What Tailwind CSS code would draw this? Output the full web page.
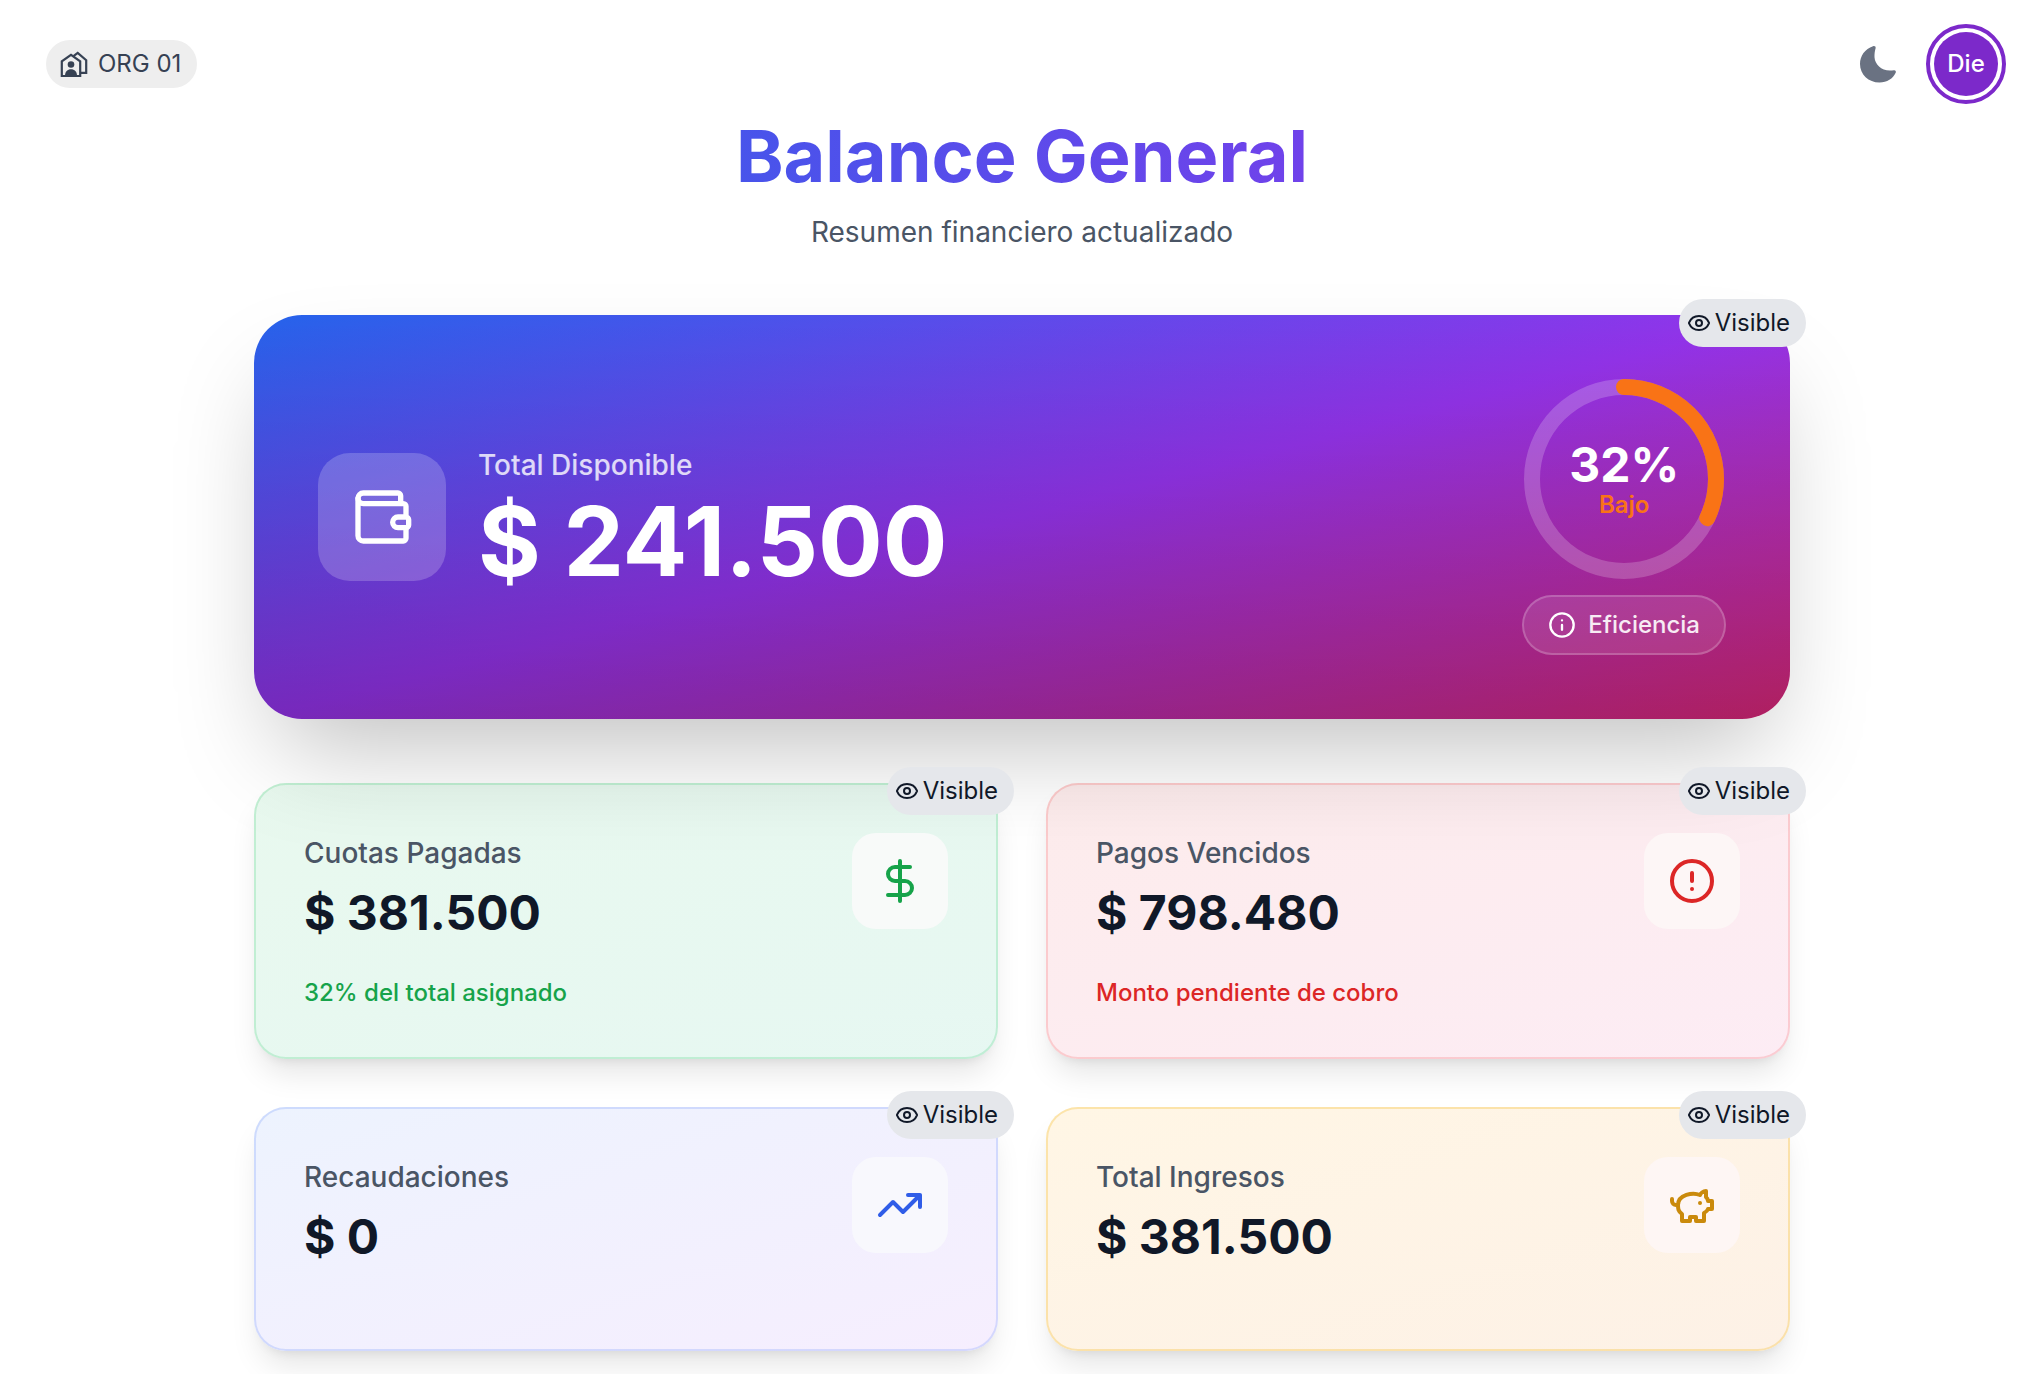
<!DOCTYPE html>
<html lang="es">
<head>
    <meta charset="UTF-8">
    <meta name="viewport" content="width=device-width, initial-scale=1.0">
    <title>Balance General</title>
    <script src="https://cdn.jsdelivr.net/npm/@tailwindcss/browser@4"></script>
</head>
<body class="min-h-screen bg-white pl-4 font-['Inter',sans-serif] text-gray-900">

    <!-- iconos compartidos -->
    <svg class="hidden">
        <symbol id="icon-eye" viewBox="0 0 24 24" fill="none" stroke="currentColor" stroke-width="2" stroke-linecap="round" stroke-linejoin="round">
            <path d="M2.06 12.35a1 1 0 0 1 0-.7 10.75 10.75 0 0 1 19.88 0 1 1 0 0 1 0 .7 10.75 10.75 0 0 1-19.88 0"/>
            <circle cx="12" cy="12" r="3"/>
        </symbol>
    </svg>

    <header class="flex items-center justify-between pt-6 pr-[22px] pl-[30px]">
        <button class="flex h-12 items-center gap-2.5 rounded-full bg-[#eeeeee] pr-4 pl-3.5 text-2xl text-gray-700">
            <svg class="size-7" viewBox="0 0 28 28" fill="none" stroke="currentColor" stroke-width="2.2">
                <path d="M1.8 26V11.400L11 4.800 20.200 11.400V26Z"/>
                <path d="M13.500 6.200 17.700 3 26.200 10.200V22.800H20.500"/>
                <circle cx="11" cy="14.500" r="3.300" fill="currentColor" stroke="none"/>
                <path d="M5 26C5 21.500 7.500 19.300 11 19.300S17 21.500 17 26Z" fill="currentColor" stroke="none"/>
            </svg>
            ORG 01
        </button>
        <div class="flex items-center gap-7">
            <button class="text-gray-500" aria-label="Cambiar tema">
                <svg class="size-10" viewBox="-2 -1.5 40 40" fill="currentColor">
                    <path d="M13 .8c1.600-.6 3 .4 2.600 2-.9 3-1.200 6-1.100 9C15 19 21 25 30 25c1.400 0 2.600 0 3.800-.3 1.600-.3 2.500 1 1.900 2.500C33 33 27 37 19.500 37 8.500 37 0 29 0 18.500 0 10.500 5 3.500 13 .8Z"/>
                </svg>
            </button>
            <button class="flex size-20 items-center justify-center rounded-full border-4 border-[#7c29ca] bg-white p-1">
                <span class="flex size-full items-center justify-center rounded-full bg-[#7c29ca] text-2xl font-medium text-white">Die</span>
            </button>
        </div>
    </header>

    <main class="mx-auto max-w-[1536px] pt-3 pb-6">
        <div class="mb-[63px] text-center">
            <h1 class="bg-linear-to-r/srgb from-[#2563eb] to-[#9333ea] bg-clip-text text-7xl leading-20 font-bold text-transparent">Balance General</h1>
            <p class="mt-4 text-[28px] leading-10 text-gray-600">Resumen financiero actualizado</p>
        </div>

        <!-- total disponible -->
        <section class="relative mb-16 rounded-[48px] bg-linear-to-br/srgb from-[#2563eb] via-[#9333ea] to-[#db2777] shadow-[0_50px_100px_-24px_rgba(0,0,0,0.25)]">
            <div class="flex items-center justify-between rounded-[48px] bg-linear-to-t/srgb from-black/20 to-transparent p-16">
                <div class="flex items-center gap-8">
                    <div class="flex size-32 items-center justify-center rounded-[32px] bg-white/20 text-white">
                        <svg class="size-16" viewBox="0 0 24 24" fill="none" stroke="currentColor" stroke-width="2" stroke-linecap="round" stroke-linejoin="round">
                            <path d="M19 7V4a1 1 0 0 0-1-1H5a2 2 0 0 0 0 4h15a1 1 0 0 1 1 1v4h-3a2 2 0 0 0 0 4h3a1 1 0 0 0 1-1v-2a1 1 0 0 0-1-1"/>
                            <path d="M3 5v14a2 2 0 0 0 2 2h15a1 1 0 0 0 1-1v-4"/>
                        </svg>
                    </div>
                    <div>
                        <p class="text-[28px] leading-10 font-medium text-white/80">Total Disponible</p>
                        <p class="mt-2 text-8xl leading-24 font-bold text-white">$ 241.500</p>
                    </div>
                </div>
                <div class="flex flex-col items-center gap-4">
                    <div class="relative size-50">
                        <svg class="size-full -rotate-90" viewBox="0 0 200 200" fill="none" stroke-width="16">
                            <circle cx="100" cy="100" r="92" stroke="white" stroke-opacity="0.2"/>
                            <circle cx="100" cy="100" r="92" pathLength="100" stroke="#f97316" stroke-linecap="round" stroke-dasharray="32 100"/>
                        </svg>
                        <div class="absolute inset-0 flex flex-col items-center justify-center pt-1">
                            <span class="text-5xl leading-12 font-bold text-white">32%</span>
                            <span class="text-2xl leading-8 font-semibold text-[#f97316]">Bajo</span>
                        </div>
                    </div>
                    <button class="flex h-15 items-center gap-3 rounded-full border-2 border-white/20 bg-white/10 px-6 text-2xl font-medium text-white/90">
                        <svg class="size-7 text-white" viewBox="0 0 24 24" fill="none" stroke="currentColor" stroke-width="2" stroke-linecap="round" stroke-linejoin="round">
                            <circle cx="12" cy="12" r="10"/>
                            <path d="M12 16v-4M12 8h.01"/>
                        </svg>
                        Eficiencia
                    </button>
                </div>
            </div>
            <button class="absolute -top-4 -right-4 flex h-12 items-center gap-1 rounded-full bg-gray-200 pr-4 pl-2 text-2xl">
                <svg class="size-6"><use href="#icon-eye"/></svg>Visible
            </button>
        </section>

        <div class="grid grid-cols-2 gap-12">
            <!-- cuotas pagadas -->
            <section class="relative rounded-[32px] border-2 border-[#22c55e]/20 bg-linear-to-br/srgb from-[#22c55e]/10 to-[#10b981]/10 bg-origin-border p-12 shadow-[0_20px_30px_-6px_rgba(0,0,0,0.1),0_8px_12px_-8px_rgba(0,0,0,0.1)]">
                <div class="flex items-start justify-between">
                    <div>
                        <p class="text-[28px] leading-10 font-medium text-gray-600">Cuotas Pagadas</p>
                        <p class="mt-2 text-5xl leading-16 font-bold">$ 381.500</p>
                    </div>
                    <div class="flex size-24 items-center justify-center rounded-3xl bg-[#f8faf9] text-[#16a34a]">
                        <svg class="size-12" viewBox="0 0 24 24" fill="none" stroke="currentColor" stroke-width="2" stroke-linecap="round" stroke-linejoin="round">
                            <path d="M12 2v20M17 5H9.500a3.500 3.500 0 0 0 0 7h5a3.500 3.500 0 0 1 0 7H6"/>
                        </svg>
                    </div>
                </div>
                <p class="mt-8 text-2xl leading-8 font-medium text-[#16a34a]">32% del total asignado</p>
                <button class="absolute -top-[18px] -right-[18px] flex h-12 items-center gap-1 rounded-full bg-gray-200 pr-4 pl-2 text-2xl">
                    <svg class="size-6"><use href="#icon-eye"/></svg>Visible
                </button>
            </section>

            <!-- pagos vencidos -->
            <section class="relative rounded-[32px] border-2 border-[#ef4444]/20 bg-linear-to-br/srgb from-[#ef4444]/10 to-[#ec4899]/10 bg-origin-border p-12 shadow-[0_20px_30px_-6px_rgba(0,0,0,0.1),0_8px_12px_-8px_rgba(0,0,0,0.1)]">
                <div class="flex items-start justify-between">
                    <div>
                        <p class="text-[28px] leading-10 font-medium text-gray-600">Pagos Vencidos</p>
                        <p class="mt-2 text-5xl leading-16 font-bold">$ 798.480</p>
                    </div>
                    <div class="flex size-24 items-center justify-center rounded-3xl bg-[#fdf6f6] text-[#dc2626]">
                        <svg class="size-12" viewBox="0 0 24 24" fill="none" stroke="currentColor" stroke-width="2" stroke-linecap="round" stroke-linejoin="round">
                            <circle cx="12" cy="12" r="10"/>
                            <path d="M12 8v4M12 16h.01"/>
                        </svg>
                    </div>
                </div>
                <p class="mt-8 text-2xl leading-8 font-medium text-[#dc2626]">Monto pendiente de cobro</p>
                <button class="absolute -top-[18px] -right-[18px] flex h-12 items-center gap-1 rounded-full bg-gray-200 pr-4 pl-2 text-2xl">
                    <svg class="size-6"><use href="#icon-eye"/></svg>Visible
                </button>
            </section>

            <!-- recaudaciones -->
            <section class="relative rounded-[32px] border-2 border-[#4f7df8]/20 bg-linear-to-br/srgb from-[#edf3fe] to-[#f6eefe] bg-origin-border p-12 pb-20 shadow-[0_20px_30px_-6px_rgba(0,0,0,0.1),0_8px_12px_-8px_rgba(0,0,0,0.1)]">
                <div class="flex items-start justify-between">
                    <div>
                        <p class="text-[28px] leading-10 font-medium text-gray-600">Recaudaciones</p>
                        <p class="mt-2 text-5xl leading-16 font-bold">$ 0</p>
                    </div>
                    <div class="flex size-24 items-center justify-center rounded-3xl bg-[#f8f8fd] text-[#305de8]">
                        <svg class="size-12" viewBox="0 0 24 24" fill="none" stroke="currentColor" stroke-width="2" stroke-linecap="round" stroke-linejoin="round">
                            <path d="M22 7 13.500 15.500 8.500 10.500 2 17M16 7h6v6"/>
                        </svg>
                    </div>
                </div>
                <button class="absolute -top-[18px] -right-[18px] flex h-12 items-center gap-1 rounded-full bg-gray-200 pr-4 pl-2 text-2xl">
                    <svg class="size-6"><use href="#icon-eye"/></svg>Visible
                </button>
            </section>

            <!-- total ingresos -->
            <section class="relative rounded-[32px] border-2 border-[#f5b820]/30 bg-linear-to-br/srgb from-[#fff6e5] to-[#fdf1e6] bg-origin-border p-12 pb-20 shadow-[0_20px_30px_-6px_rgba(0,0,0,0.1),0_8px_12px_-8px_rgba(0,0,0,0.1)]">
                <div class="flex items-start justify-between">
                    <div>
                        <p class="text-[28px] leading-10 font-medium text-gray-600">Total Ingresos</p>
                        <p class="mt-2 text-5xl leading-16 font-bold">$ 381.500</p>
                    </div>
                    <div class="flex size-24 items-center justify-center rounded-3xl bg-[#fef6f4] text-[#ca8a0c]">
                        <svg class="size-12" viewBox="0 0 24 24" fill="none" stroke="currentColor" stroke-width="2" stroke-linecap="round" stroke-linejoin="round">
                            <path d="M19 5c-1.500 0-2.800 1.400-3 2-3.500-1.500-11-.3-11 5 0 1.800 0 3 2 4.500V20h4v-2h3v2h4v-4c1-.5 1.700-1 2-2h2v-4h-2c0-1-.5-1.500-1-2V5z"/>
                            <path d="M2 9v1c0 1.100.9 2 2 2h1M16 11h.01"/>
                        </svg>
                    </div>
                </div>
                <button class="absolute -top-[18px] -right-[18px] flex h-12 items-center gap-1 rounded-full bg-gray-200 pr-4 pl-2 text-2xl">
                    <svg class="size-6"><use href="#icon-eye"/></svg>Visible
                </button>
            </section>
        </div>
    </main>

</body>
</html>
